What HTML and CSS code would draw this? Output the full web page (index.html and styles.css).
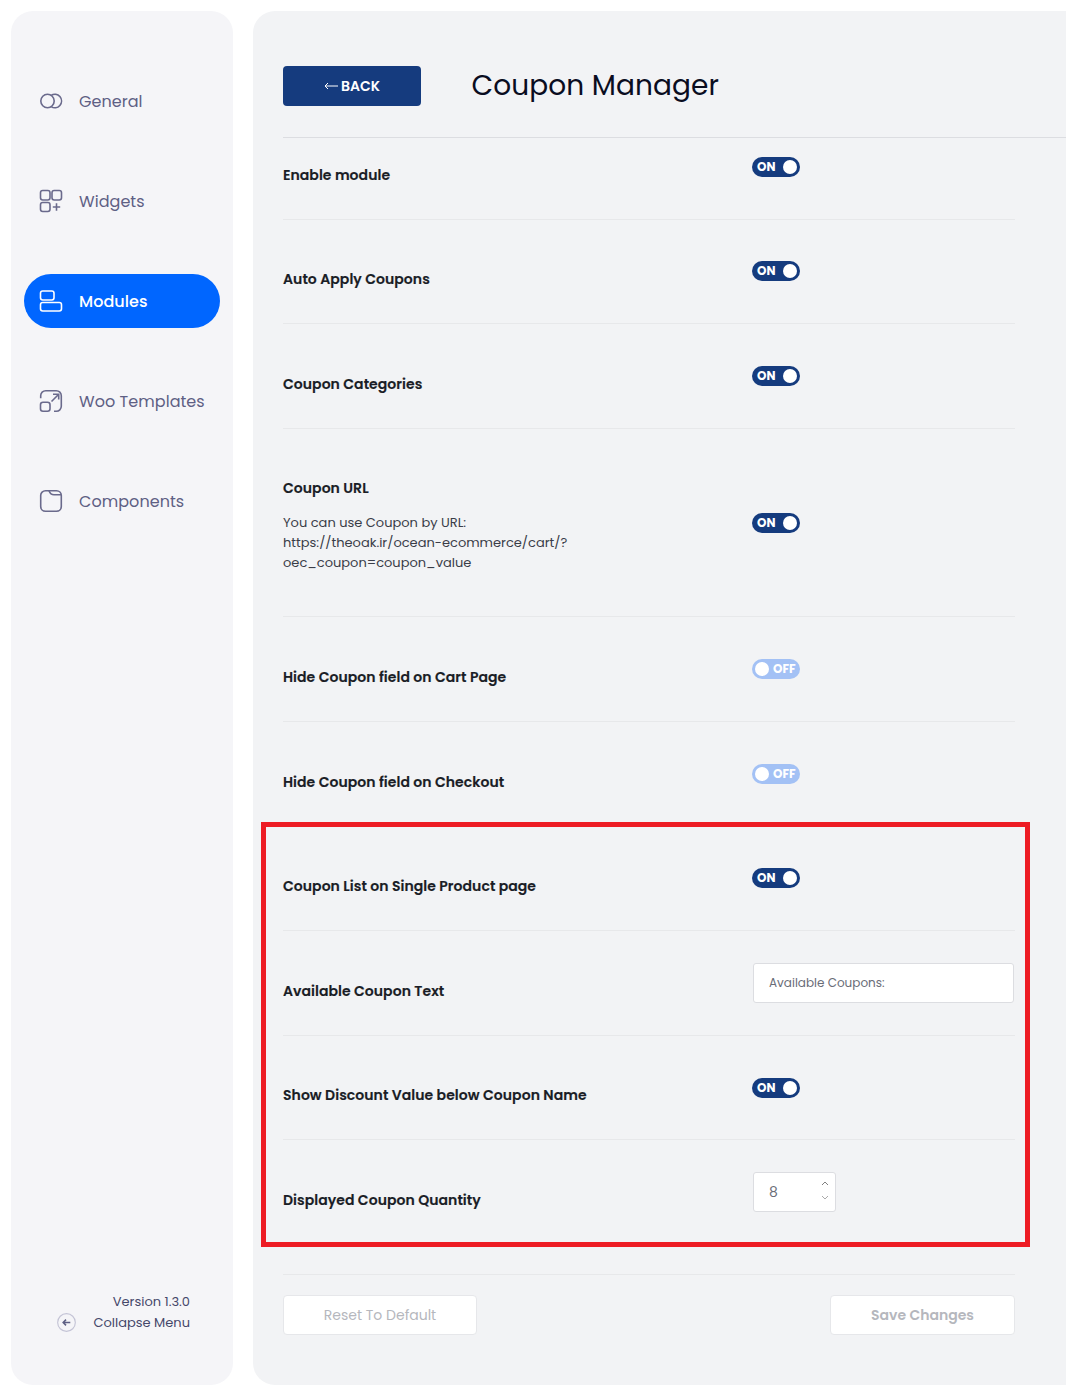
FILE: index.html
```html
<!DOCTYPE html>
<html lang="en">
  <head>
    <meta charset="UTF-8" />
    <title>Coupon Manager</title>
    <link rel="stylesheet" href="styles.css">
  </head>
  <body>
    <div class="layout">
      <aside class="sidebar">
        <nav class="side-nav">
          <a class="side-link" href="#">
            <svg class="side-icon" viewBox="0 0 24 24"><circle cx="8.5" cy="12" r="6.7"/><path d="M12.15 6.4A6.7 6.7 0 1 1 12.15 17.6"/></svg>
            General
          </a>
          <a class="side-link" href="#">
            <svg class="side-icon" viewBox="0 0 24 24"><rect x="1.5" y="1.5" width="9.5" height="9.5" rx="2.2"/><rect x="13" y="1.5" width="9.5" height="9.5" rx="2.2"/><rect x="1.5" y="13.5" width="9.5" height="9" rx="2.2"/><path d="M17.5 14.3v7.4M13.8 18h7.4"/></svg>
            Widgets
          </a>
          <a class="side-link active" href="#">
            <svg class="side-icon" viewBox="0 0 24 24"><rect x="1.5" y="2" width="13.5" height="9" rx="2.2"/><rect x="1.5" y="13.5" width="21" height="8.5" rx="2.2"/></svg>
            Modules
          </a>
          <a class="side-link" href="#">
            <svg class="side-icon" viewBox="0 0 24 24"><path d="M1.7 9.3V6.7a5 5 0 0 1 5-5h10.600a5 5 0 0 1 5 5v10.600a5 5 0 0 1-5 5H15"/><rect x="1.5" y="13.3" width="9.5" height="9" rx="2.5"/><path d="M12.5 12.5L19.7 5.3M14 5.3h5.700V10.500"/></svg>
            Woo Templates
          </a>
          <a class="side-link" href="#">
            <svg class="side-icon" viewBox="0 0 24 24"><path d="M6.5 1.7H17.500a4.800 4.800 0 0 1 4.800 4.800V17.500a4.800 4.800 0 0 1-4.800 4.800H6.500a4.800 4.800 0 0 1-4.800-4.800V6.500a4.800 4.800 0 0 1 4.800-4.800z"/><path d="M10 1.700Q11.500 5.800 15 5.800H22"/></svg>
            Components
          </a>
        </nav>
        <div class="side-foot">
          <div class="version">Version 1.3.0</div>
          <div class="collapse">
            <svg class="collapse-icon" viewBox="0 0 20 20"><circle class="collapse-ring" cx="10" cy="10" r="9.3"/><path class="collapse-arrow" d="M14 10H6.5M9.5 7l-3 3 3 3"/></svg>
            Collapse Menu
          </div>
        </div>
      </aside>

      <main class="panel">
        <header class="panel-head">
          <a class="back-btn" href="#">
            <svg class="back-arrow" viewBox="0 0 14 8"><path d="M14 4H1M4 1L1 4l3 3"/></svg>
            BACK
          </a>
          <h1>Coupon Manager</h1>
        </header>

        <div class="rows">
          <div class="row row-first">
            <div class="row-label">Enable module</div>
            <div class="row-control"><span class="toggle on">ON</span></div>
          </div>
          <div class="row">
            <div class="row-label">Auto Apply Coupons</div>
            <div class="row-control"><span class="toggle on">ON</span></div>
          </div>
          <div class="row">
            <div class="row-label">Coupon Categories</div>
            <div class="row-control"><span class="toggle on">ON</span></div>
          </div>
          <div class="row row-url">
            <div class="row-label">
              Coupon URL
              <p class="row-help">You can use Coupon by URL:<br>https://theoak.ir/ocean-ecommerce/cart/?<br>oec_coupon=coupon_value</p>
            </div>
            <div class="row-control"><span class="toggle on">ON</span></div>
          </div>
          <div class="row">
            <div class="row-label">Hide Coupon field on Cart Page</div>
            <div class="row-control"><span class="toggle off">OFF</span></div>
          </div>
          <div class="row">
            <div class="row-label">Hide Coupon field on Checkout</div>
            <div class="row-control"><span class="toggle off">OFF</span></div>
          </div>
          <div class="row">
            <div class="row-label">Coupon List on Single Product page</div>
            <div class="row-control"><span class="toggle on">ON</span></div>
          </div>
          <div class="row">
            <div class="row-label">Available Coupon Text</div>
            <div class="row-control field"><div class="text-input">Available Coupons:</div></div>
          </div>
          <div class="row">
            <div class="row-label">Show Discount Value below Coupon Name</div>
            <div class="row-control"><span class="toggle on">ON</span></div>
          </div>
          <div class="row row-last">
            <div class="row-label">Displayed Coupon Quantity</div>
            <div class="row-control field">
              <div class="num-input">8
                <svg class="spin" viewBox="0 0 8 20"><path class="spin-up" d="M1 4L4 1l3 3"/><path class="spin-down" d="M1 15l3 3 3-3"/></svg>
              </div>
            </div>
          </div>
          <div class="highlight"></div>
        </div>

        <footer class="panel-foot">
          <button class="foot-btn reset">Reset To Default</button>
          <button class="foot-btn save">Save Changes</button>
        </footer>
      </main>
    </div>
  </body>
</html>
```

FILE: styles.css
```css
html,
body {
  margin: 0;
  padding: 0;
  background: #fff;
  font-family: "Poppins", "Open Sans", "Noto Sans", sans-serif;
  color: #1f2430;
  overflow: hidden;
}

.layout {
  display: flex;
  gap: 20px;
  width: 1066px;
  height: 1393px;
  padding: 11px 0 8px 11px;
  box-sizing: border-box;
}

/* sidebar */
.sidebar {
  width: 222px;
  flex: none;
  background: #f5f5f8;
  border-radius: 22px;
  padding: 63px 13px 0;
  box-sizing: border-box;
  display: flex;
  flex-direction: column;
}

.side-nav {
  display: flex;
  flex-direction: column;
  gap: 46px;
}

.side-link {
  display: flex;
  align-items: center;
  gap: 16px;
  height: 54px;
  padding-left: 15px;
  border-radius: 27px;
  font-size: 16px;
  letter-spacing: 0.05px;
  color: #5e6084;
  text-decoration: none;
}

.side-link.active {
  background: #0066ff;
  color: #fff;
  font-weight: 500;
}

.side-icon {
  width: 24px;
  height: 24px;
  fill: none;
  stroke: #6a6a8c;
  stroke-width: 1.6;
}

.active .side-icon {
  stroke: #fff;
}

.side-foot {
  margin-top: auto;
  padding: 0 30px 52px 0;
  text-align: right;
  font-size: 13px;
  line-height: 21px;
  color: #45486a;
}

.collapse {
  display: flex;
  justify-content: flex-end;
  align-items: center;
  gap: 17px;
}

.collapse-icon {
  width: 19px;
  height: 19px;
  fill: none;
}

.collapse-ring {
  stroke: #c4c4d6;
  stroke-width: 1.2;
}

.collapse-arrow {
  stroke: #5e6084;
  stroke-width: 1.6;
}

/* main panel */
.panel {
  flex: 1;
  background: #f2f3f5;
  border-radius: 22px 0 0 22px;
  padding: 55px 0 0 30px;
  box-sizing: border-box;
  min-width: 0;
}

.panel-head {
  display: flex;
  align-items: flex-start;
  gap: 50.5px;
  height: 71px;
  border-bottom: 1px solid #dcdde1;
}

.back-btn {
  display: flex;
  align-items: center;
  justify-content: center;
  gap: 3px;
  width: 138px;
  height: 40px;
  background: #153b7e;
  border-radius: 4px;
  color: #fff;
  font-size: 14px;
  font-weight: 600;
  text-decoration: none;
}

.back-arrow {
  width: 14px;
  height: 8px;
  fill: none;
  stroke: #fff;
  stroke-width: 1;
}

h1 {
  margin: 0;
  font-size: 28px;
  font-weight: 400;
  line-height: 40px;
  letter-spacing: 0.08px;
  color: #0a0d1f;
}

/* settings rows */
.rows {
  position: relative;
  width: 732px;
}

.row {
  display: flex;
  align-items: flex-start;
  height: 104.6px;
  box-sizing: border-box;
  border-bottom: 1px solid #e7e8ea;
}

.row-label {
  width: 469px;
  flex: none;
  padding-top: 49.7px;
  font-size: 14px;
  font-weight: 600;
  line-height: 20px;
  letter-spacing: 0.05px;
  -webkit-text-stroke: 0.15px #1a1d26;
  color: #1a1d26;
}

.row-help {
  margin: 15px 0 0;
  width: 300px;
  font-size: 13px;
  font-weight: 400;
  letter-spacing: 0;
  -webkit-text-stroke: 0;
  color: #3a3d48;
}

.row-control {
  flex: 1;
  padding-top: 41.85px;
}

.row-control.field {
  padding-top: 32px;
  padding-left: 1px;
}

.row-first {
  height: 81.6px;
}

.row-first .row-label {
  padding-top: 27px;
}

.row-first .row-control {
  padding-top: 19px;
}

.row-url {
  height: 188.5px;
}

.row-url .row-label {
  padding-top: 49px;
}

.row-url .row-control {
  padding-top: 84px;
}

.row-last {
  border-bottom: 0;
}

.toggle {
  position: relative;
  display: block;
  width: 48px;
  height: 20px;
  border-radius: 10px;
  font-size: 12px;
  font-weight: 700;
  line-height: 20px;
  color: #fff;
  box-sizing: border-box;
}

.toggle::after {
  content: "";
  position: absolute;
  top: 3px;
  width: 14px;
  height: 14px;
  border-radius: 50%;
  background: #fff;
}

.toggle.on {
  background: #153b7e;
  padding-left: 5px;
}

.toggle.on::after {
  right: 3px;
}

.toggle.off {
  background: #a3c1f5;
  padding-left: 21px;
}

.toggle.off::after {
  left: 3px;
}

.text-input,
.num-input {
  background: #fff;
  border: 1px solid #dcdde1;
  border-radius: 3px;
  height: 40px;
  box-sizing: border-box;
  line-height: 38px;
  padding-left: 15px;
  color: #6a6d78;
}

.text-input {
  width: 261px;
  font-size: 12px;
}

.num-input {
  position: relative;
  width: 83px;
  font-size: 14px;
}

.spin {
  position: absolute;
  right: 6px;
  top: 8px;
  width: 8px;
  height: 20px;
  fill: none;
  stroke-width: 1;
}

.spin-up {
  stroke: #808080;
}

.spin-down {
  stroke: #aaaaaa;
}

.highlight {
  position: absolute;
  left: -22px;
  right: -15px;
  top: 684px;
  height: 425px;
  border: 5px solid #ed1c24;
  box-sizing: border-box;
}

/* footer buttons */
.panel-foot {
  display: flex;
  justify-content: space-between;
  width: 732px;
  margin-top: 29px;
  padding-top: 20px;
  border-top: 1px solid #e7e8ea;
}

.foot-btn {
  height: 40px;
  padding: 2px 0 0;
  background: #fff;
  border: 1px solid #e6e7ea;
  border-radius: 4px;
  font-family: inherit;
  font-size: 14px;
  color: #b5b7bd;
}

.reset {
  width: 194px;
}

.save {
  width: 185px;
  font-weight: 600;
}
```
